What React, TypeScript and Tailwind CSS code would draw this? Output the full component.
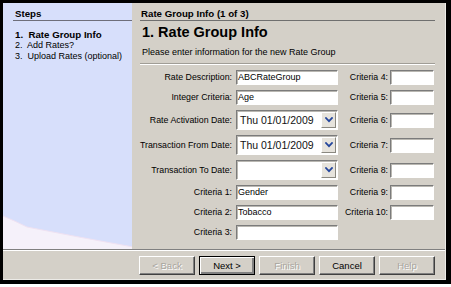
import React from 'react';

const sunken =
  'bg-white border border-t-[#7b7b7b] border-l-[#7b7b7b] border-r-white border-b-white shadow-[inset_1px_1px_0_#b9b7b1]';

const TextBox = ({ value = '', className = '' }: { value?: string; className?: string }) => (
  <div className={`${sunken} h-[15px] flex items-center pl-[1px] text-[9px] leading-none text-black ${className}`}>
    {value}
  </div>
);

const Chevron = () => (
  <svg width="8" height="6" viewBox="0 0 8 6">
    <polyline points="1,1 4,4.2 7,1" fill="none" stroke="#24469c" strokeWidth="1.8" strokeLinecap="square" />
  </svg>
);

const DateBox = ({ value = '' }: { value?: string }) => (
  <div className={`${sunken} h-[20px] flex items-center`}>
    <div className="flex-1 pl-[3px] text-[10.5px] leading-none text-[#111]">{value}</div>
    <div className="w-[15px] h-[16px] mr-[1px] bg-[#e6e3dc] border border-t-white border-l-white border-r-[#8a8880] border-b-[#8a8880] flex items-center justify-center">
      <Chevron />
    </div>
  </div>
);

const Label = ({ text, className = '' }: { text: string; className?: string }) => (
  <div className={`flex items-center justify-end whitespace-nowrap text-[8.8px] leading-none text-black ${className}`}>
    {text}
  </div>
);

const WizButton = ({ text, disabled, primary }: { text: string; disabled?: boolean; primary?: boolean }) => (
  <div
    className={`w-[56px] h-[19px] flex items-center justify-center text-[9.5px] leading-none bg-[#d4d0c8] ${
      primary
        ? 'border border-black shadow-[inset_1px_1px_0_#ffffff,inset_-2px_-2px_0_#808080]'
        : 'border border-t-white border-l-white border-r-[#404040] border-b-[#404040] shadow-[inset_-1px_-1px_0_#808080]'
    } ${disabled ? 'text-[#a8a59e] [text-shadow:1px_1px_0_#ffffff]' : 'text-black'}`}
  >
    {text}
  </div>
);

export default function App() {
  return (
    <div className="w-[451px] h-[287px] bg-white font-['Liberation_Sans',Arial,sans-serif]">
      <div className="h-[284px] bg-black pt-[3px] pl-[3px] pr-[5px] pb-[4px]">
        <div className="h-full flex flex-col bg-[#d4d0c8] border-r border-b border-[#ecebe7]">
          <div className="flex h-[246px]">
            {/* steps panel */}
            <div className="relative w-[129px] bg-[#d7dffb] overflow-hidden">
              <div className="ml-[10px] pt-[5px]">
                <div className="h-[13px] border-b border-[#6e6e7a] pl-[2px] text-[9.7px] font-bold leading-[12px] text-black">
                  Steps
                </div>
                <div className="mt-[8px] pl-[2px] flex flex-col text-[9px] leading-[11px] text-black">
                  <div className="font-bold text-[9.7px]">1.&nbsp; Rate Group Info</div>
                  <div>2.&nbsp; Add Rates?</div>
                  <div>3.&nbsp; Upload Rates (optional)</div>
                </div>
              </div>
              <svg className="absolute left-0 bottom-0" width="130" height="40" viewBox="0 0 130 40">
                <path d="M0 7 Q12 12 24 18 Q80 29 130 38 L130 40 L0 40 Z" fill="#f5f1fa" />
                <path d="M0 7 Q12 12 24 18 Q80 29 130 38" fill="none" stroke="#efe2f2" strokeWidth="1" />
              </svg>
            </div>

            {/* content panel */}
            <div className="flex-1 pl-[8px] pr-[10px] pt-[5px]">
              <div className="h-[13px] border-b border-[#6f6f6f] pl-[1px] text-[9.7px] font-bold leading-[12px] text-black">
                Rate Group Info (1 of 3)
              </div>
              <div className="mt-[3px] pl-[2px] text-[14.5px] font-bold leading-[17px] text-black">1. Rate Group Info</div>
              <div className="mt-[6px] pl-[2px] text-[9px] leading-[11px] text-black">
                Please enter information for the new Rate Group
              </div>
              <div className="mt-[5px] border-t border-b border-t-[#a09d96] border-b-white" />

              <div className="mt-[5px] grid grid-cols-[96px_102px_52px_44px] grid-rows-[15px_15px_20px_20px_20px_15px_15px_15px] gap-y-[5px]">
                <Label text="Rate Description:" className="pr-[4px]" />
                <TextBox value="ABCRateGroup" />
                <Label text="Criteria 4:" className="pr-[2px]" />
                <TextBox />

                <Label text="Integer Criteria:" className="pr-[4px]" />
                <TextBox value="Age" />
                <Label text="Criteria 5:" className="pr-[2px]" />
                <TextBox />

                <Label text="Rate Activation Date:" className="pr-[4px]" />
                <DateBox value="Thu 01/01/2009" />
                <Label text="Criteria 6:" className="pr-[2px]" />
                <div className="flex items-center"><TextBox className="w-full" /></div>

                <Label text="Transaction From Date:" className="pr-[4px]" />
                <DateBox value="Thu 01/01/2009" />
                <Label text="Criteria 7:" className="pr-[2px]" />
                <div className="flex items-center"><TextBox className="w-full" /></div>

                <Label text="Transaction To Date:" className="pr-[4px]" />
                <DateBox />
                <Label text="Criteria 8:" className="pr-[2px]" />
                <div className="flex items-center"><TextBox className="w-full" /></div>

                <Label text="Criteria 1:" className="pr-[4px]" />
                <TextBox value="Gender" />
                <Label text="Criteria 9:" className="pr-[2px]" />
                <TextBox />

                <Label text="Criteria 2:" className="pr-[4px]" />
                <TextBox value="Tobacco" />
                <Label text="Criteria 10:" className="pr-[2px]" />
                <TextBox />

                <Label text="Criteria 3:" className="pr-[4px]" />
                <TextBox />
                <div />
                <div />
              </div>
            </div>
          </div>

          <div className="border-t border-b border-t-[#808080] border-b-white" />
          <div className="flex-1 flex justify-end items-start pt-[5px] pr-[10px] gap-[4px]">
            <WizButton text="< Back" disabled />
            <WizButton text="Next >" primary />
            <WizButton text="Finish" disabled />
            <WizButton text="Cancel" />
            <WizButton text="Help" disabled />
          </div>
        </div>
      </div>
    </div>
  );
}
